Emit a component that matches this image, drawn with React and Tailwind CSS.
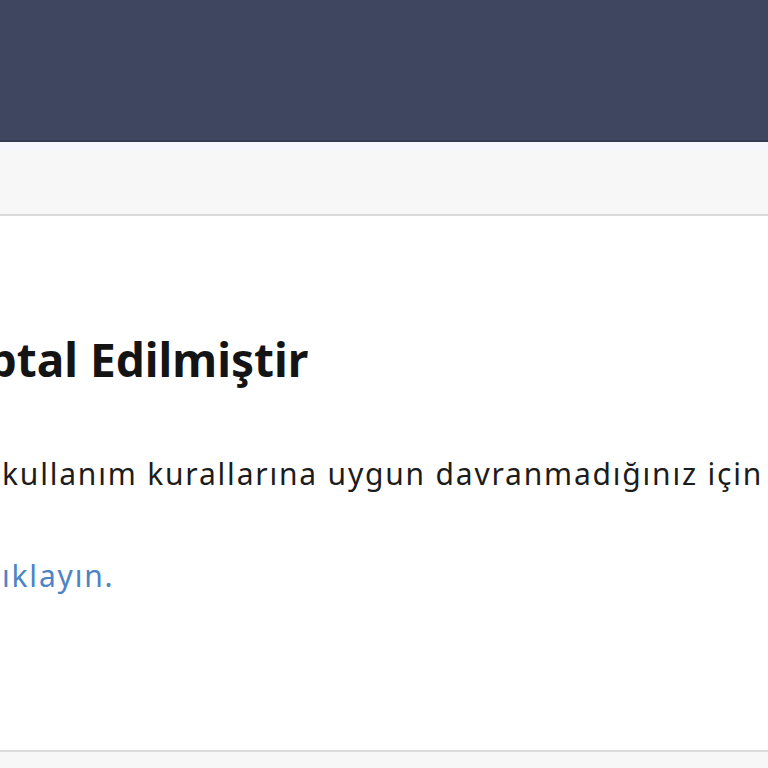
// Account cancelled notice — cropped page view
function Clipped({ width, children }) {
  // shows only the tail of a line that runs off the left edge
  return (
    <span className={`flex shrink-0 justify-end overflow-hidden whitespace-pre ${width}`}>
      <span className="shrink-0">{children}</span>
    </span>
  );
}

export default function App() {
  return (
    <div className="flex min-h-[768px] w-full flex-col overflow-hidden bg-[#f7f7f7] font-['Noto_Sans',sans-serif]">
      {/* Top bar */}
      <header className="h-[142px] shrink-0 border-b-2 border-[#353b50] bg-[#3f4660]" />

      {/* Sub bar */}
      <div className="h-[74px] shrink-0 border-b-2 border-[#dadada] bg-[#f7f7f7]">
        <div className="h-[8px] bg-[#f6f7fd]" />
      </div>

      {/* Notice */}
      <main className="flex h-[536px] shrink-0 flex-col border-b-2 border-[#dcdcdc] bg-white pt-[120px]">
        <h1 className="flex whitespace-nowrap text-[46px] font-bold leading-none text-[#141414]">
          <Clipped width="w-[90px]">Hesabınız İptal </Clipped>
          <span>Edilmiştir</span>
        </h1>

        <p className="mt-[77px] flex whitespace-nowrap text-[30px] leading-none tracking-[1.8px] text-[#1c1c1c]">
          <Clipped width="w-[2px]">Hesabınız, sitemizin </Clipped>
          <span>kullanım kurallarına uygun davranmadığınız için hesabınız iptal edilmiştir.</span>
        </p>

        <p className="mt-[72px] flex whitespace-nowrap text-[30px] leading-none tracking-[1.8px]">
          <Clipped width="w-[2px]">Detaylı bilgi için t</Clipped>
          <a href="#" className="text-[#4c84c4]">
            ıklayın.
          </a>
        </p>
      </main>

      <div className="flex-1 bg-[#f7f7f7]" />
    </div>
  );
}
